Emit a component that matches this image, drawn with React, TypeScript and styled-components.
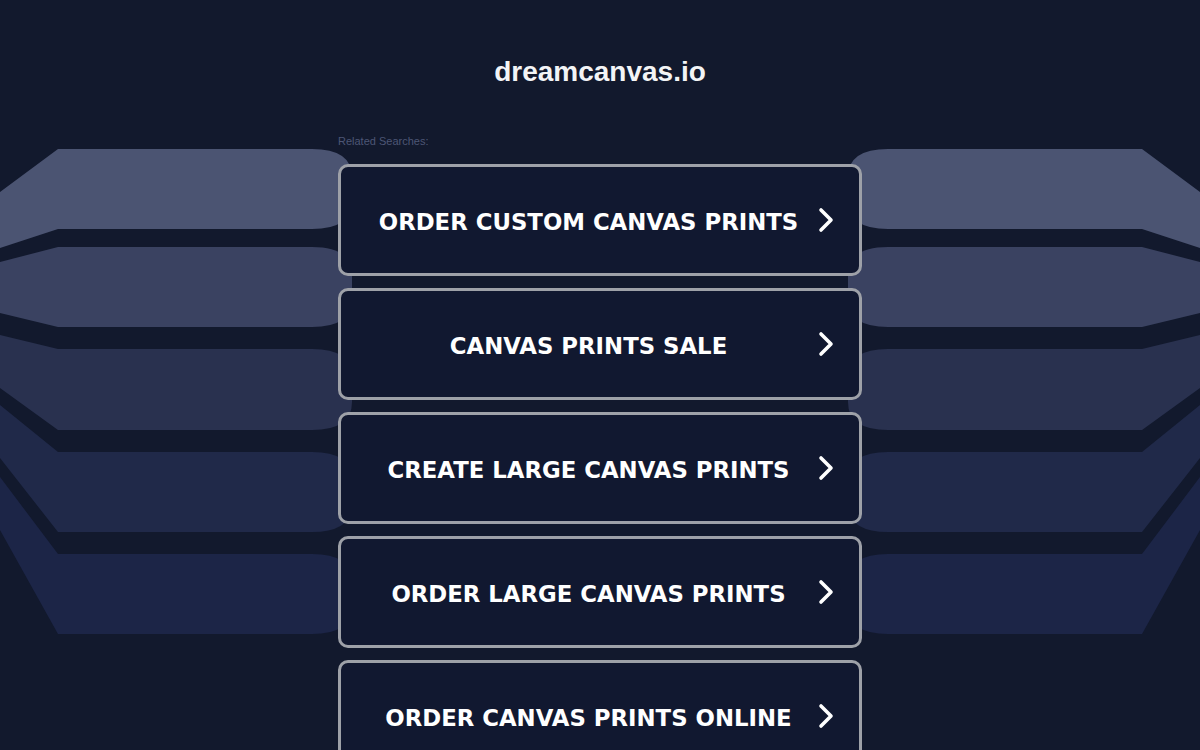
import React from 'react';
import styled, {createGlobalStyle} from 'styled-components';

const GlobalStyle = createGlobalStyle`
  html, body {
    margin: 0;
    padding: 0;
    background-color: #12192d;
  }
  body {
    font-family: "Liberation Sans", Arial, sans-serif;
  }
`;

// Styled Components
const Page = styled.div`
  position: relative;
  min-height: 100vh;
  overflow: hidden;
`;

const Backdrop = styled.svg`
  position: absolute;
  top: 0;
  left: 0;
  width: 1200px;
  height: 750px;
  z-index: 0;
`;

const Content = styled.main`
  position: relative;
  z-index: 1;
  display: flex;
  flex-direction: column;
  align-items: center;
`;

const Title = styled.h1`
  margin: 56px 0 0;
  font-family: "Liberation Sans", Arial, sans-serif;
  font-size: 28px;
  line-height: 32px;
  font-weight: bold;
  color: #f3f4f6;
`;

const Results = styled.section`
  width: 524px;
  margin-top: 47px;
  display: flex;
  flex-direction: column;
`;

const Label = styled.span`
  font-family: "Liberation Sans", Arial, sans-serif;
  font-size: 11px;
  line-height: 13px;
  color: #4d5675;
  margin-bottom: 16px;
`;

const List = styled.div`
  display: flex;
  flex-direction: column;
  gap: 12px;
`;

const LinkButton = styled.a`
  box-sizing: border-box;
  height: 112px;
  display: flex;
  align-items: center;
  padding: 0 25px 0 24px;
  background-color: #111830;
  border: 3px solid #9ea1a8;
  border-radius: 10px;
  text-decoration: none;
  cursor: pointer;
`;

const LinkText = styled.span`
  flex: 1;
  text-align: center;
  margin-right: 6px;
  padding-top: 3px;
  font-family: "DejaVu Sans", Verdana, sans-serif;
  font-weight: bold;
  font-size: 22.8px;
  color: #ffffff;
  white-space: nowrap;
`;

const Chevron = styled.svg`
  width: 16px;
  height: 26px;
  flex-shrink: 0;
`;

const bands = [
  {top: 149, bot: 229, t0: 192, b0: 248, fill: '#4b5472'},
  {top: 247, bot: 327, t0: 262, b0: 313, fill: '#3a4261'},
  {top: 349, bot: 430, t0: 335, b0: 388, fill: '#29314f'},
  {top: 452, bot: 532, t0: 405, b0: 458, fill: '#202949'},
  {top: 554, bot: 634, t0: 477, b0: 530, fill: '#1c2547'},
];

const links = [
  'ORDER CUSTOM CANVAS PRINTS',
  'CANVAS PRINTS SALE',
  'CREATE LARGE CANVAS PRINTS',
  'ORDER LARGE CANVAS PRINTS',
  'ORDER CANVAS PRINTS ONLINE',
];

function bandPath(b: typeof bands[number]) {
  return `M0,${b.t0} L58,${b.top} L312,${b.top} Q352,${b.top} 352,${b.top + 28} ` +
    `L352,${b.bot - 28} Q352,${b.bot} 312,${b.bot} L58,${b.bot} L0,${b.b0} Z`;
}

function Bands() {
  const shapes = bands.map((b, i) => <path key={i} d={bandPath(b)} fill={b.fill} />);
  return (
    <Backdrop viewBox="0 0 1200 750" aria-hidden="true">
      <g>{shapes}</g>
      <g transform="translate(1200,0) scale(-1,1)">{shapes}</g>
    </Backdrop>
  );
}

function App() {
  return (
    <Page>
      <GlobalStyle />
      <Bands />
      <Content>
        <Title>dreamcanvas.io</Title>
        <Results>
          <Label>Related Searches:</Label>
          <List>
            {links.map((text) => (
              <LinkButton key={text} href="#">
                <LinkText>{text}</LinkText>
                <Chevron viewBox="0 0 16 26">
                  <polyline points="3,3 13,13 3,23" fill="none" stroke="#ffffff"
                            strokeWidth="3.6" strokeLinecap="round" strokeLinejoin="round" />
                </Chevron>
              </LinkButton>
            ))}
          </List>
        </Results>
      </Content>
    </Page>
  );
}

export default App;
